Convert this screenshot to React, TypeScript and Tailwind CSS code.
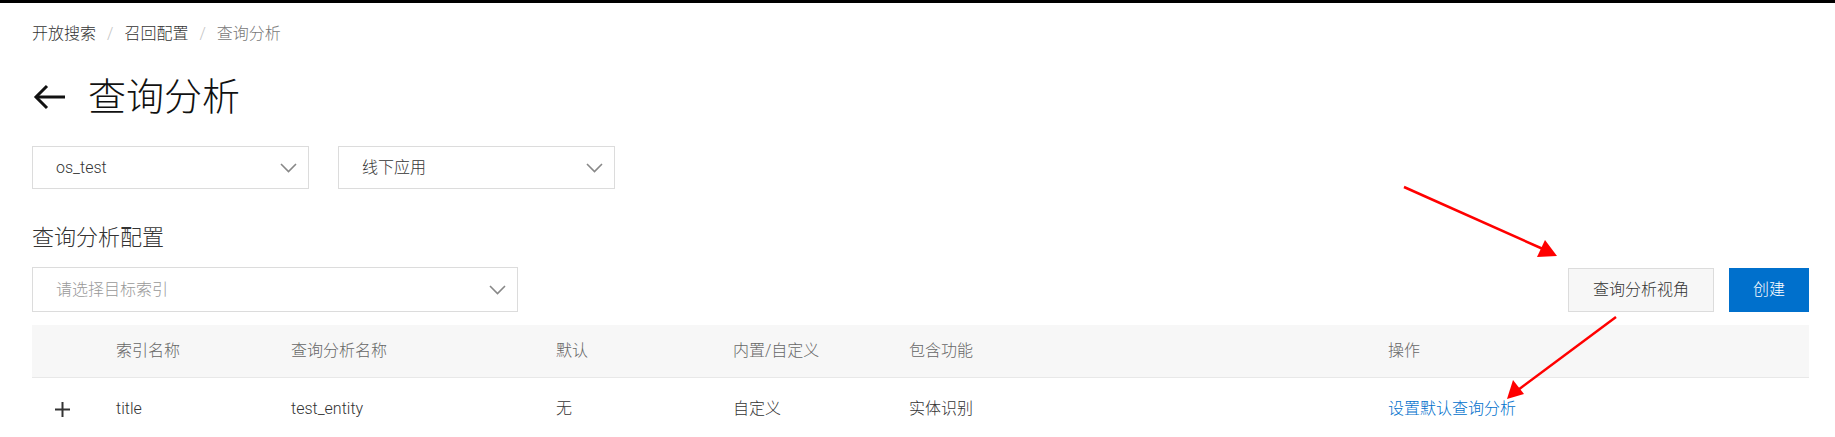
import React from "react";

const Chevron = () => (
  <svg width="17" height="10" viewBox="0 0 17 10" fill="none">
    <polyline points="1,1 8.5,8.5 16,1" stroke="#888" strokeWidth="1.6" />
  </svg>
);

function Select({ text, width, height, placeholder }: { text: string; width: string; height: string; placeholder?: boolean }) {
  return (
    <div className={`${width} ${height} flex items-center justify-between border border-[#dcdcdc] bg-white pl-[23px] pr-[11px]`}>
      <span className={`text-[16px] ${placeholder ? "text-[#999]" : "text-[#333]"}`}>{text}</span>
      <Chevron />
    </div>
  );
}

export default function App() {
  const cols = "grid grid-cols-[84px_175px_265px_177px_176px_479px_1fr]";
  return (
    <div
      className="relative w-[1835px] h-[437px] overflow-hidden bg-white border-t-[3px] border-black pl-[32px] pr-[26px] font-light"
      style={{ fontFamily: 'Roboto, "Noto Sans CJK SC", sans-serif' }}
    >
      {/* breadcrumb */}
      <div className="mt-[19px] flex h-[24px] items-center text-[16px]">
        <span className="text-[#333]">开放搜索</span>
        <span className="mx-[11px] text-[#c4c4c4]">/</span>
        <span className="text-[#333]">召回配置</span>
        <span className="mx-[11px] text-[#c4c4c4]">/</span>
        <span className="text-[#777]">查询分析</span>
      </div>

      {/* title */}
      <div className="mt-[27px] flex h-[48px] items-center">
        <svg width="33" height="26" viewBox="0 0 33 26" fill="none" className="ml-px">
          <line x1="3" y1="13" x2="32" y2="13" stroke="#111" strokeWidth="3" />
          <polyline points="14,2 3,13 14,24" stroke="#111" strokeWidth="3" fill="none" />
        </svg>
        <span className="ml-[22px] text-[38px] leading-[48px] text-[#111]">查询分析</span>
      </div>

      {/* selects */}
      <div className="mt-[25px] flex gap-[29px]">
        <Select text="os_test" width="w-[277px]" height="h-[43px]" />
        <Select text="线下应用" width="w-[277px]" height="h-[43px]" />
      </div>

      {/* section heading */}
      <div className="mt-[34px] text-[22px] leading-[30px] text-[#333]">查询分析配置</div>

      {/* toolbar */}
      <div className="mt-[14px] flex h-[45px] items-center justify-between">
        <Select text="请选择目标索引" width="w-[486px]" height="h-[45px]" placeholder />
        <div className="flex items-center gap-[15px]">
          <button className="h-[44px] w-[146px] border border-[#dcdcdc] bg-[#f7f7f7] text-[16px] text-[#333]">
            查询分析视角
          </button>
          <button className="h-[44px] w-[80px] bg-[#0070cc] text-[16px] text-white">创建</button>
        </div>
      </div>

      {/* table */}
      <div className="mt-[13px]">
        <div className={`${cols} h-[53px] items-center border-b border-[#e8e8e8] bg-[#f7f7f7] text-[16px] text-[#666]`}>
          <div />
          <div>索引名称</div>
          <div>查询分析名称</div>
          <div>默认</div>
          <div>内置/自定义</div>
          <div>包含功能</div>
          <div>操作</div>
        </div>
        <div className={`${cols} h-[62px] items-center text-[16px] text-[#333]`}>
          <div className="pl-[23px]">
            <svg width="15" height="15" viewBox="0 0 15 15">
              <line x1="0" y1="7.5" x2="15" y2="7.5" stroke="#333" strokeWidth="2" />
              <line x1="7.5" y1="0" x2="7.5" y2="15" stroke="#333" strokeWidth="2" />
            </svg>
          </div>
          <div>title</div>
          <div>test_entity</div>
          <div>无</div>
          <div>自定义</div>
          <div>实体识别</div>
          <div className="text-[#0070cc]">设置默认查询分析</div>
        </div>
      </div>

      {/* annotation arrows */}
      <svg
        className="pointer-events-none absolute left-0 top-[-3px]"
        width="1835"
        height="437"
        viewBox="0 0 1835 437"
      >
        <line x1="1404" y1="187" x2="1543" y2="249" stroke="#ff0000" strokeWidth="2.5" />
        <polygon points="1557,256 1537,257 1545,240" fill="#ff0000" />
        <line x1="1616" y1="317" x2="1518" y2="390" stroke="#ff0000" strokeWidth="2.5" />
        <polygon points="1507,399 1513,380 1524,394" fill="#ff0000" />
      </svg>
    </div>
  );
}
